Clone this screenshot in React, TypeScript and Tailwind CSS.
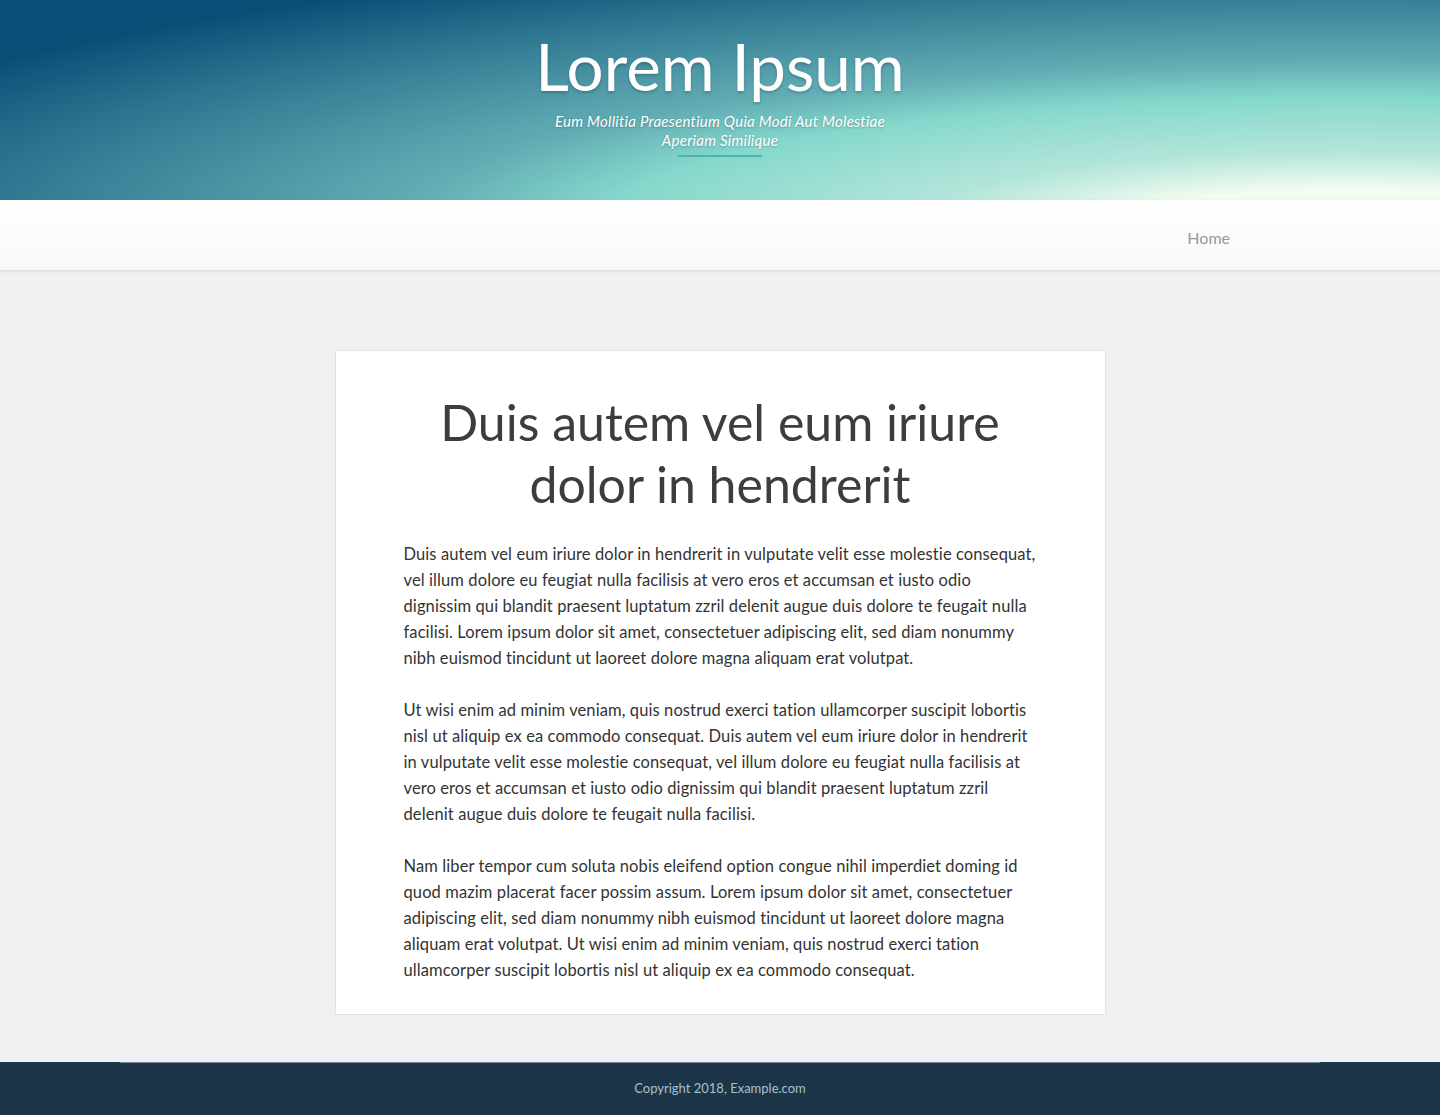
export default function App() {
  const font = { fontFamily: "'Lato', 'DejaVu Sans', sans-serif" };
  return (
    <div className="min-h-screen bg-[#f0f0f2] flex flex-col" style={font}>
      <header className="h-[200px] bg-[radial-gradient(ellipse_1928px_340px_at_1350px_230px,#f4fcf0_12%,#b3e5da_23%,#85d8cc_39%,#62aeb4_49%,#2f7791_71%,#0a4e77_86%,#0c5079_100%)] flex flex-col items-center pt-[27px]">
        <h1 className="text-[65.5px] leading-[78px] text-white [text-shadow:0_2px_3px_rgba(0,0,0,0.2)]">
          Lorem Ipsum
        </h1>
        <p className="mt-[7px] w-[360px] text-center text-[15px] tracking-[0.25px] leading-[19px] italic text-white [text-shadow:0_1px_2px_rgba(0,0,0,0.25)]">
          Eum Mollitia Praesentium Quia Modi Aut Molestiae Aperiam Similique
        </p>
        <div className="mt-[5px] h-[2px] w-[84px] bg-[#4db5a6]" />
      </header>

      <nav className="h-[70px] bg-gradient-to-b from-white to-[#f8f8f8] shadow-[0_1px_3px_rgba(0,0,0,0.12)] flex items-center justify-end pr-[210px] pt-[6px]">
        <a className="text-[16px] text-[#999]">Home</a>
      </nav>

      <main className="flex-1 flex justify-center pt-[80px] pb-[47px]">
        <article className="w-[771px] bg-white border border-[#e2e2e4] rounded-[2px] px-[66px] pt-[40px] pb-[29px]">
          <h2 className="text-center text-[50px] leading-[62px] text-[#3d3d3d] px-[20px]">
            Duis autem vel eum iriure dolor in hendrerit
          </h2>
          <div className="mt-[26px] ml-[2px] space-y-[26px] text-[16.5px] tracking-[0.1px] leading-[26px] text-[#333]">
            <p>
              Duis autem vel eum iriure dolor in hendrerit in vulputate velit esse molestie consequat, vel illum dolore eu feugiat nulla facilisis at vero eros et accumsan et iusto odio dignissim qui blandit praesent luptatum zzril delenit augue duis dolore te feugait nulla facilisi. Lorem ipsum dolor sit amet, consectetuer adipiscing elit, sed diam nonummy nibh euismod tincidunt ut laoreet dolore magna aliquam erat volutpat.
            </p>
            <p>
              Ut wisi enim ad minim veniam, quis nostrud exerci tation ullamcorper suscipit lobortis nisl ut aliquip ex ea commodo consequat. Duis autem vel eum iriure dolor in hendrerit in vulputate velit esse molestie consequat, vel illum dolore eu feugiat nulla facilisis at vero eros et accumsan et iusto odio dignissim qui blandit praesent luptatum zzril delenit augue duis dolore te feugait nulla facilisi.
            </p>
            <p>
              Nam liber tempor cum soluta nobis eleifend option congue nihil imperdiet doming id quod mazim placerat facer possim assum. Lorem ipsum dolor sit amet, consectetuer adipiscing elit, sed diam nonummy nibh euismod tincidunt ut laoreet dolore magna aliquam erat volutpat. Ut wisi enim ad minim veniam, quis nostrud exerci tation ullamcorper suscipit lobortis nisl ut aliquip ex ea commodo consequat.
            </p>
          </div>
        </article>
      </main>

      <footer className="bg-[#1c3549]">
        <div className="mx-[120px] h-[1px] bg-[#7c8a96]" />
        <p className="h-[52px] flex items-center justify-center text-[13px] text-[#a9c0cc]">
          Copyright 2018, Example.com
        </p>
      </footer>
    </div>
  );
}
